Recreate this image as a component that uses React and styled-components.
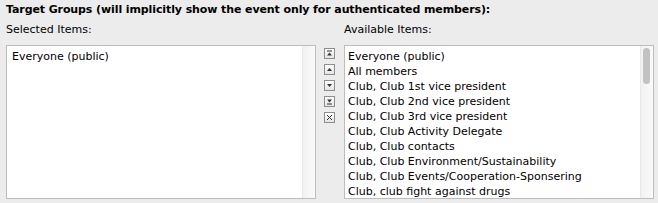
import styled, { createGlobalStyle } from 'styled-components';

const GlobalStyle = createGlobalStyle`
  html, body {
    margin: 0;
    padding: 0;
    background: #ececec;
  }
  body {
    font-family: 'DejaVu Sans', Verdana, sans-serif;
    font-size: 11px;
    color: #000;
  }
`;

const Wrap = styled.div`
  width: 658px;
  height: 203px;
  padding: 3px 0 0 6px;
  box-sizing: border-box;
  overflow: hidden;
`;

const Title = styled.div`
  font-weight: bold;
  line-height: 14px;
  height: 14px;
  letter-spacing: -0.1px;
`;

const Columns = styled.div`
  display: flex;
  align-items: flex-start;
  margin-top: 6px;
`;

const Column = styled.div`
  display: flex;
  flex-direction: column;
  width: 310px;
`;

const Label = styled.div`
  line-height: 14px;
  height: 14px;
  margin-bottom: 8px;
`;

const ListBox = styled.div`
  display: flex;
  height: 154px;
  box-sizing: border-box;
  border: 1px solid #bdbdbd;
  background: #fff;
`;

const Items = styled.ul`
  flex: 1;
  list-style: none;
  margin: 0;
  padding: 3px 0 0 ${(p) => p.$pad || 4}px;
  overflow: hidden;
`;

const Item = styled.li`
  line-height: 15px;
  white-space: nowrap;
`;

const Track = styled.div`
  width: 10px;
  padding: 2px 0 0 2px;
  background: linear-gradient(to right, #f2f2f2, #fafafa);
  border-left: 1px solid #e8e8e8;
`;

const Thumb = styled.div`
  width: 7px;
  height: 36px;
  border-radius: 4px;
  background: #c2c2c2;
`;

const Buttons = styled.div`
  display: flex;
  flex-direction: column;
  gap: 5px;
  margin: 25px 9px 0 8px;
`;

const MoveButton = styled.button`
  width: 11px;
  height: 11px;
  padding: 0;
  border: 1px solid #8e8e8e;
  background: linear-gradient(#fdfdfd, #e4e4e4);
  display: flex;
  align-items: center;
  justify-content: center;
  svg {
    display: block;
  }
`;

const Icon = ({ kind }) => {
  const c = '#333';
  return (
    <svg width="7" height="7" viewBox="0 0 7 7">
      {kind === 'top' && (
        <>
          <rect x="1" y="0.5" width="5" height="1" fill={c} />
          <polygon points="3.5,2.5 1,5.5 6,5.5" fill={c} />
        </>
      )}
      {kind === 'up' && <polygon points="3.5,2 1,5 6,5" fill={c} />}
      {kind === 'down' && <polygon points="1,2 6,2 3.5,5" fill={c} />}
      {kind === 'bottom' && (
        <>
          <polygon points="1,1.5 6,1.5 3.5,4.5" fill={c} />
          <rect x="1" y="5.5" width="5" height="1" fill={c} />
        </>
      )}
      {kind === 'remove' && (
        <path d="M1 1 L6 6 M6 1 L1 6" stroke={c} strokeWidth="1" />
      )}
    </svg>
  );
};

const available = [
  'Everyone (public)',
  'All members',
  'Club, Club 1st vice president',
  'Club, Club 2nd vice president',
  'Club, Club 3rd vice president',
  'Club, Club Activity Delegate',
  'Club, Club contacts',
  'Club, Club Environment/Sustainability',
  'Club, Club Events/Cooperation-Sponsering',
  'Club, club fight against drugs',
];

export default function App() {
  return (
    <>
      <GlobalStyle />
      <Wrap>
        <Title>Target Groups (will implicitly show the event only for authenticated members):</Title>
        <Columns>
          <Column>
            <Label>Selected Items:</Label>
            <ListBox>
              <Items $pad={5}>
                <Item>Everyone (public)</Item>
              </Items>
              <Track />
            </ListBox>
          </Column>
          <Buttons>
            {['top', 'up', 'down', 'bottom', 'remove'].map((k) => (
              <MoveButton key={k} type="button">
                <Icon kind={k} />
              </MoveButton>
            ))}
          </Buttons>
          <Column>
            <Label>Available Items:</Label>
            <ListBox>
              <Items $pad={3}>
                {available.map((a) => (
                  <Item key={a}>{a}</Item>
                ))}
              </Items>
              <Track>
                <Thumb />
              </Track>
            </ListBox>
          </Column>
        </Columns>
      </Wrap>
    </>
  );
}
